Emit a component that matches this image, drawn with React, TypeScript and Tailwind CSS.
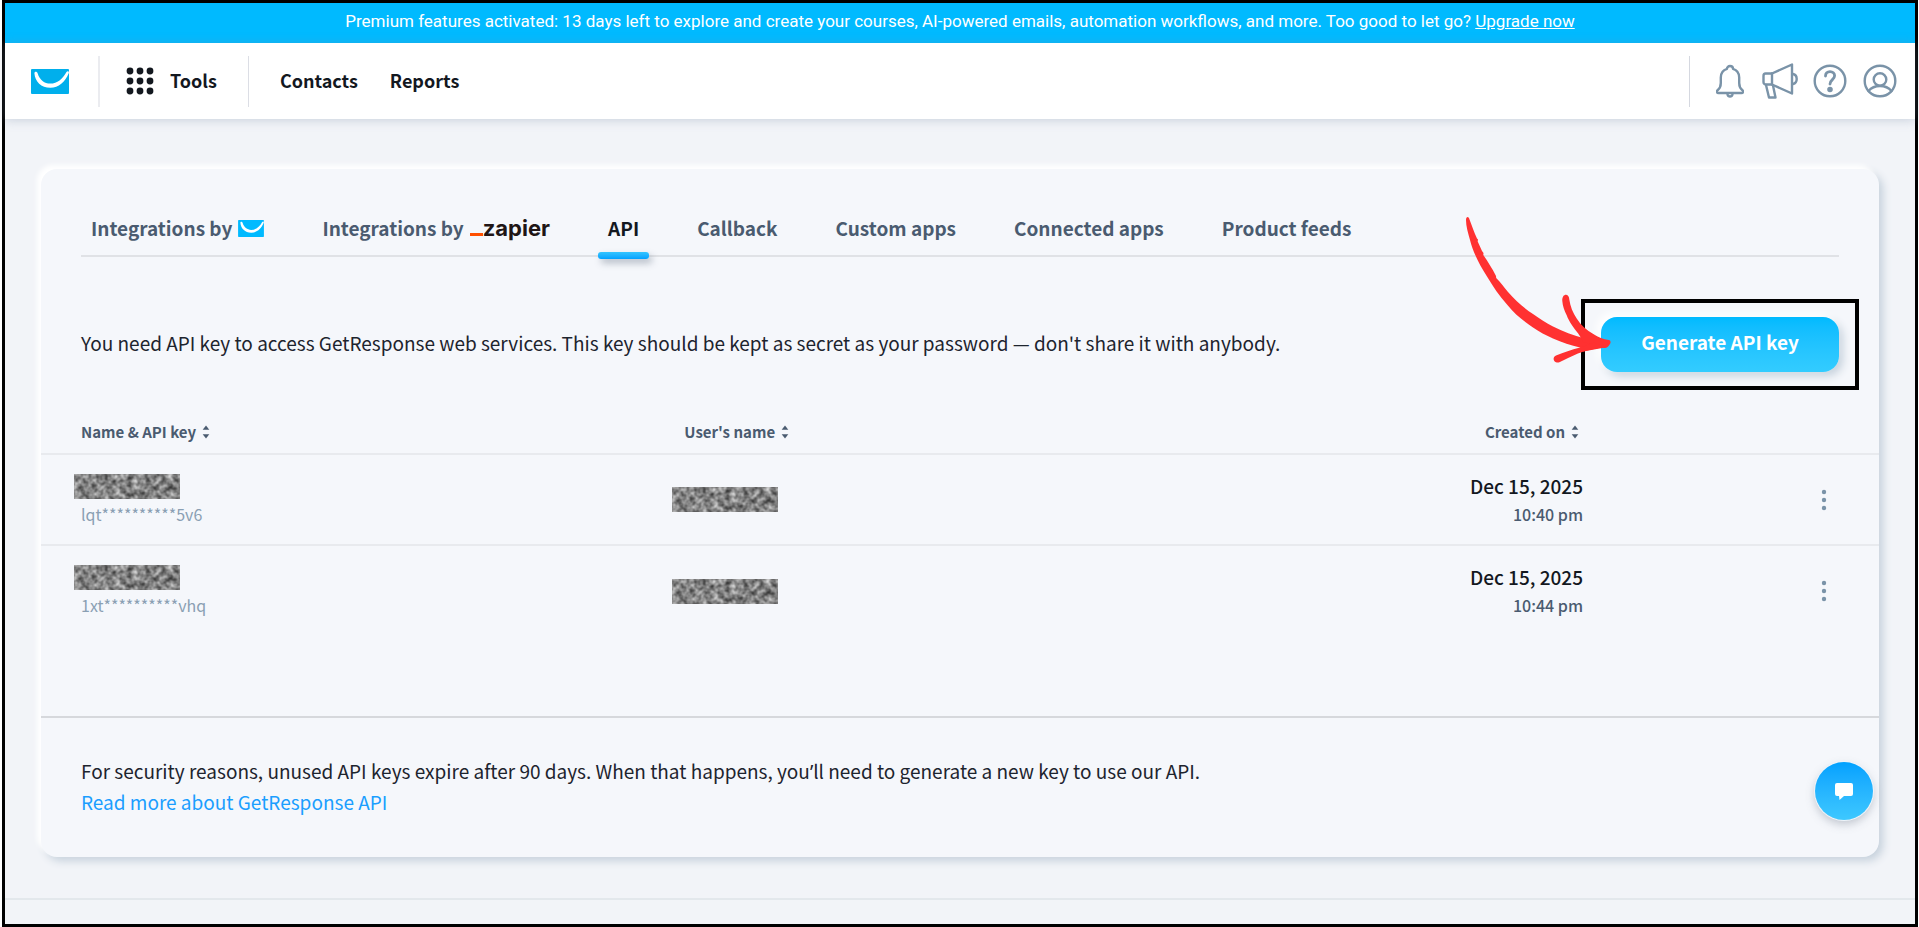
import React, { useState } from 'react';
import clsx from 'clsx';

const apiKeys = [
  { id: 1, key: 'lqt**********5v6', date: 'Dec 15, 2025', time: '10:40 pm' },
  { id: 2, key: '1xt**********vhq', date: 'Dec 15, 2025', time: '10:44 pm' },
];

const tabs = ['getresponse', 'zapier', 'API', 'Callback', 'Custom apps', 'Connected apps', 'Product feeds'];

function Envelope({ className, fill = '#00baff' }: { className?: string; fill?: string }) {
  return (
    <svg viewBox="0 0 38 25" className={className} aria-hidden="true">
      <rect width="38" height="25" rx="1" fill={fill} />
      <path d="M3.4 4.2c0-2 2.7-2 3.2 0C8.700 11 13.500 14.600 19.200 14.600c7.300 0 12.300-4.600 16.300-11.600 1-1.700 3-.6 2.200 1.200C34 13 27.700 18.800 19.400 18.800 10.200 18.800 4 12.600 3.400 4.200z" fill="#fff" />
    </svg>
  );
}

function ZapierLogo() {
  return (
    <span className="flex items-baseline">
      <span className="h-[3px] w-[13px] bg-[#ff4f00]" />
      <span className="font-[Inter,sans-serif] text-[22px] leading-6 font-bold text-[#201515]">zapier</span>
    </span>
  );
}

function SortIcon() {
  return (
    <svg viewBox="0 0 8 14" className="h-[14px] w-2" fill="#4a5b70" aria-hidden="true">
      <path d="M4 .6 7.300 4.800H.7z" />
      <path d="M4 13.400.7 9.200h6.600z" />
    </svg>
  );
}

// Noise patch that hides private values
function Redacted({ id, className }: { id: string; className?: string }) {
  return (
    <svg className={clsx('block h-[25px] w-[106px]', className)} aria-hidden="true">
      <filter id={id} x="0" y="0" width="100%" height="100%" colorInterpolationFilters="sRGB">
        <feTurbulence type="fractalNoise" baseFrequency="0.17" numOctaves="2" seed="7" />
        <feColorMatrix values="0.900 0 0 0 0.060  0.900 0 0 0 0.060  0.900 0 0 0 0.060  0 0 0 0 1" />
      </filter>
      <rect width="106" height="25" filter={`url(#${id})`} />
    </svg>
  );
}

function SortableHeader({ label }: { label: string }) {
  return (
    <button className="inline-flex items-center gap-[6px] font-bold">
      {label}
      <SortIcon />
    </button>
  );
}

function TopBar() {
  const iconProps = {
    fill: 'none',
    stroke: '#7a93a8',
    strokeWidth: 2.4,
    strokeLinecap: 'round' as const,
    strokeLinejoin: 'round' as const,
  };

  return (
    <header className="relative flex h-[76px] items-center bg-white pr-[18px] pl-[26px] shadow-[0_1px_10px_rgba(120,140,165,0.35)]">
      <a href="#" aria-label="GetResponse">
        <Envelope className="h-[25px] w-[38px]" fill="#00afec" />
      </a>
      <div className="ml-[29px] h-[51px] w-[2px] bg-[#ebecf0]" />
      <button className="ml-[26px] flex items-center gap-4 text-lg font-bold text-[#13181f]">
        <svg viewBox="0 0 28 28" className="h-7 w-7" fill="#13181f" aria-hidden="true">
          {[4, 14, 24].map(y => [4, 14, 24].map(x => <circle key={`${x}-${y}`} cx={x} cy={y} r="3.400" />))}
        </svg>
        <span className="pb-[2px]">Tools</span>
      </button>
      <div className="ml-[31px] h-[51px] w-px bg-[#dcdee5]" />
      <nav className="ml-[31px] flex gap-8 pb-[2px] text-lg font-bold text-[#13181f]">
        <a href="#">Contacts</a>
        <a href="#">Reports</a>
      </nav>

      <div className="ml-auto flex items-center">
        <div className="h-[51px] w-px bg-[#d5d8e0]" />
        <button aria-label="Notifications" className="ml-[26px]">
          <svg viewBox="0 0 28 34" className="h-[34px] w-7" {...iconProps}>
            <path d="M14 2c1.700 0 3 1.200 3 2.800 4 1.200 6.200 4.500 6.200 8.700v5.500c0 3.500 1 5.500 3.200 7.200 1.300 1.200.8 2.800-.9 2.800h-23c-1.700 0-2.200-1.600-.9-2.800C3.800 24.500 4.800 22.500 4.800 19v-5.500C4.800 9.300 7 6 11 4.800 11 3.200 12.300 2 14 2z" />
            <path d="M11.500 30.500c.3 1.300 1.300 2 2.500 2s2.200-.7 2.500-2" />
          </svg>
        </button>
        <button aria-label="News" className="ml-[18px]">
          <svg viewBox="0 0 36 36" className="h-9 w-9" {...iconProps}>
            <path d="M30 1.500v29L10 21.500H3.500c-1 0-2-1-2-2.500v-6c0-1.500 1-2.500 2-2.500H10z" />
            <path d="M10 10.500v11M31 11c2.300.5 3.700 2.600 3.700 5s-1.400 4.500-3.700 5M4 22l3 12.500h6.500L11 22.500" />
          </svg>
        </button>
        <button aria-label="Help" className="ml-[15px]">
          <svg viewBox="0 0 34 34" className="h-[34px] w-[34px]" {...iconProps}>
            <circle cx="17" cy="17" r="15.300" />
            <path d="M12.500 12c0-2.700 1.800-4.400 4.500-4.400s4.600 1.700 4.600 4.200c0 3.700-4.600 4-4.600 8.200" strokeWidth="2.800" />
            <circle cx="17" cy="25.500" r="1.600" fill="#7a93a8" />
          </svg>
        </button>
        <button aria-label="Account" className="ml-4">
          <svg viewBox="0 0 34 34" className="h-[34px] w-[34px]" {...iconProps}>
            <circle cx="17" cy="17" r="15.300" />
            <circle cx="17" cy="15.500" r="6.300" />
            <path d="M5.500 27c2.700-3.200 6.800-5 11.500-5s8.800 1.800 11.500 5" />
          </svg>
        </button>
      </div>
    </header>
  );
}

function TabLabel({ tab }: { tab: string }) {
  if (tab === 'getresponse') {
    return (
      <>
        Integrations by
        <Envelope className="h-[17px] w-[26px]" />
      </>
    );
  }
  if (tab === 'zapier') {
    return (
      <>
        Integrations by
        <ZapierLogo />
      </>
    );
  }
  return <>{tab}</>;
}

function HandDrawnArrow() {
  return (
    <svg
      viewBox="0 0 152 152"
      className="pointer-events-none absolute top-[-103px] right-[227px] h-[152px] w-[152px]"
      fill="#ff3131"
      aria-hidden="true"
    >
      <path d="M6 6c0-4 3-4 3.500-.5C12 12 14 18 17 24.500l1 1-.3 2L22 37l1.500 2-.2 2C28 48 32 54 36 62l.2 2C41 69 44 73 48 78c8 9 16 16 25 22 7 5 13 9 20 12.500 10 5 20 9 32 12l22 3-2 6-22 4c-1-1-2-3-3-4-9-2-18-5-27-9-7-3-14-7-20-11-10-7-18-13-26-23-8-9-14-18-20-28C19 50 13 38 10 26 8 19 6 12 6 6z" />
      <path d="M102.300 87c-.5-8 7-8 7-1.500 1 7 3.500 13 7.400 19 4.500 7 10 12 16.600 15.500 5 3.500 10 5 15.500 6 2.500.8 2 3.200.7 4.700-1.500 2-2 3-5 3.300L123 128c-1-2-3-6-5-8.700-4-5-9-11.500-11.300-18-2.400-5-4-9.300-4.400-14.300z" />
      <path d="M96 141.500c8-3.200 15-5.500 24-8l14-5 12 4.500c-8 .8-16 2.700-23 4.700-7 2.300-13 5.300-20 8.800-3 1.500-5 2.700-7 1.800-2.800-1-3.500-5.300 0-6.800z" />
    </svg>
  );
}

export default function App() {
  const [activeTab, setActiveTab] = useState('API');

  return (
    <div className="flex min-h-screen bg-white px-px pl-[2px] font-['Noto_Sans_CJK_SC',sans-serif] text-[#1d242e]">
      <div className="flex flex-1 flex-col border-[3px] border-black bg-[#f2f4f8]">
        <div className="flex h-10 items-center justify-center bg-[#00baff] px-4 pb-[2px] font-[Roboto,sans-serif] text-[17px] text-white">
          <p>
            Premium features activated: 13 days left to explore and create your courses, AI-powered emails, automation
            workflows, and more. Too good to let go?{' '}
            <a href="#" className="underline">Upgrade now</a>
          </p>
        </div>

        <TopBar />

        <main className="flex-1 px-9 pt-[50px] pb-10">
          <section className="rounded-2xl bg-[#f5f7fb] shadow-[-4px_-4px_5px_#ffffff,4px_4px_8px_#c6d1dc]">
            <div className="px-10 pt-10">
              <nav className="flex h-12 gap-[38px] border-b-2 border-[#e0e2e6]">
                {tabs.map(tab => (
                  <button
                    key={tab}
                    onClick={() => setActiveTab(tab)}
                    className={clsx(
                      'relative flex items-center gap-[6px] px-[10px] pb-2 text-[19px] leading-6 font-bold whitespace-nowrap',
                      activeTab === tab ? 'text-[#13181f]' : 'text-[#4a5b70]'
                    )}
                  >
                    <TabLabel tab={tab} />
                    {activeTab === tab && (
                      <span className="absolute inset-x-0 -bottom-1 h-[7px] rounded-[3px] bg-linear-to-b from-[#33c5ff] to-[#00a1ff] shadow-[3px_4px_7px_rgba(80,95,115,0.4)]" />
                    )}
                  </button>
                ))}
              </nav>

              <div className="mt-[60px] flex items-center justify-between gap-10">
                <p className="pb-1 text-[19px] leading-[30px]">
                  You need API key to access GetResponse web services. This key should be kept as secret as your password
                  — don't share it with anybody.
                </p>
                <div className="relative shrink-0">
                  <button className="block h-[55px] w-[238px] rounded-2xl bg-linear-to-b from-[#00baff] to-[#33ccff] pb-1 text-[19px] font-bold text-white shadow-[-4px_-4px_8px_#ffffff,4px_4px_8px_#c6d1dc]">
                    Generate API key
                  </button>
                  <div className="pointer-events-none absolute -inset-x-5 -inset-y-[18px] border-4 border-black" />
                  <HandDrawnArrow />
                </div>
              </div>
            </div>

            <table className="mt-[38px] w-full table-fixed text-left">
              <thead className="text-[15px] leading-5 text-[#4a5b70]">
                <tr className="h-11 border-b-2 border-[#e8eaee]">
                  <th className="w-[35%] pl-10"><SortableHeader label="Name & API key" /></th>
                  <th><SortableHeader label="User's name" /></th>
                  <th className="pr-1 text-right"><SortableHeader label="Created on" /></th>
                  <th className="w-[296px]" aria-label="Actions" />
                </tr>
              </thead>
              <tbody>
                {apiKeys.map(item => (
                  <tr key={item.id} className="h-[91px] border-b-2 border-[#e8eaee] last:border-b-0">
                    <td className="pl-10">
                      <Redacted id={`name-${item.id}`} className="-ml-[7px]" />
                      <div className="mt-[3px] text-base leading-6 text-[#8a9fb3]">{item.key}</div>
                    </td>
                    <td>
                      <Redacted id={`user-${item.id}`} className="-ml-3" />
                    </td>
                    <td className="text-right font-medium">
                      <div className="text-[19px] leading-7 text-[#13181f]">{item.date}</div>
                      <div className="text-base leading-7 text-[#4a5b70]">{item.time}</div>
                    </td>
                    <td className="pr-[52px] pb-[3px] text-right">
                      <button aria-label="Key options" className="align-middle">
                        <svg viewBox="0 0 6 22" className="h-[22px] w-[6px]" fill="#7a93a8" aria-hidden="true">
                          <circle cx="3" cy="3" r="2.200" />
                          <circle cx="3" cy="11" r="2.200" />
                          <circle cx="3" cy="19" r="2.200" />
                        </svg>
                      </button>
                    </td>
                  </tr>
                ))}
              </tbody>
            </table>

            <footer className="mt-20 border-t-2 border-[#d6d8dc] px-10 pt-[38px] pb-10 text-[19px] leading-[30px]">
              <p>
                For security reasons, unused API keys expire after 90 days. When that happens, you
                <span className="font-['Noto_Sans',sans-serif]">’</span>ll need to generate a new key to use our API.
              </p>
              <a href="#" className="text-[#1a9eff]">Read more about GetResponse API</a>
            </footer>
          </section>
        </main>

        <div className="h-[26px] border-t-2 border-[#e3e8ec]" />
      </div>

      <button
        aria-label="Open chat"
        className="fixed right-[46px] bottom-[107px] flex h-[58px] w-[58px] items-center justify-center rounded-full bg-linear-to-b from-[#00a1ff] to-[#3dc8ff] shadow-[0_0_0_1px_#eef4fa,0_4px_10px_rgba(90,100,120,0.35)]"
      >
        <svg viewBox="0 0 18 17" className="h-[17px] w-[18px]" fill="#fff" aria-hidden="true">
          <path d="M2 0h14a2 2 0 0 1 2 2v9a2 2 0 0 1-2 2H9l-4.500 4L4 13H2a2 2 0 0 1-2-2V2a2 2 0 0 1 2-2z" />
        </svg>
      </button>
    </div>
  );
}
